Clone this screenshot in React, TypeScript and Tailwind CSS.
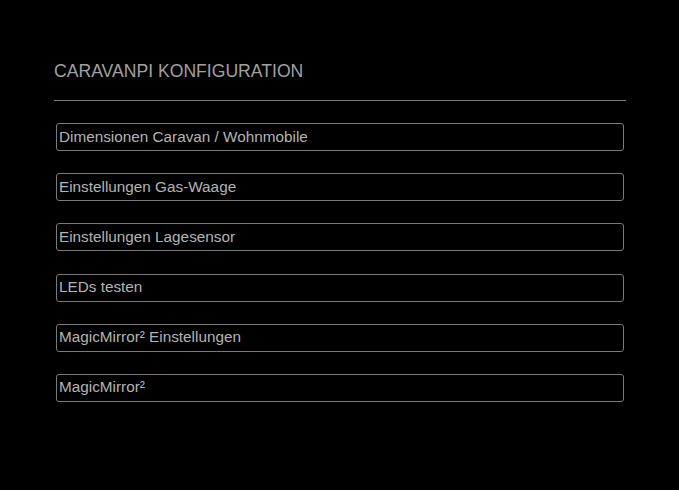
const items = [
  'Dimensionen Caravan / Wohnmobile',
  'Einstellungen Gas-Waage',
  'Einstellungen Lagesensor',
  'LEDs testen',
  'MagicMirror² Einstellungen',
  'MagicMirror²',
];

export default function App() {
  return (
    <div className="min-h-screen w-full bg-black font-['Liberation_Sans',Arial,sans-serif]">
      <div className="w-[572px] ml-[54px] pt-[61px]">
        <h1 className="text-[17.6px] leading-[20px] text-[#a0a0a0] font-normal">CARAVANPI KONFIGURATION</h1>
        <div className="mt-[19px] h-px bg-[#7a7a7a]" />
        <div className="mt-[22px] flex flex-col gap-[22.2px] px-[2px]">
          {items.map((label) => (
            <div
              key={label}
              className="h-[28px] flex items-center border border-[#7a7a7a] rounded-[3px] pl-[2px] text-[15.3px] text-[#b4b4b4]"
            >
              {label}
            </div>
          ))}
        </div>
      </div>
    </div>
  );
}
